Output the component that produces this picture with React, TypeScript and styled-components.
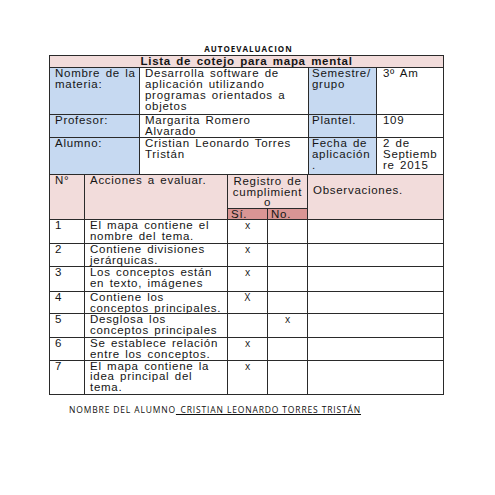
import React from "react";
import styled, { createGlobalStyle } from "styled-components";

const Global = createGlobalStyle`
  html, body { margin: 0; padding: 0; background: #ffffff; }
  body { width: 495px; height: 495px; overflow: hidden; }
`;

const Page = styled.div`
  width: 495px;
  padding-top: 44px;
  display: flex;
  flex-direction: column;
  align-items: flex-start;
`;

const Title = styled.div`
  align-self: center;
  font-family: "Open Sans", "DejaVu Sans", sans-serif;
  font-weight: 700;
  font-size: 8px;
  letter-spacing: 1px;
  line-height: 10px;
  color: #111;
  margin: 0 0 1px 2px;
`;

const Table = styled.table`
  border-collapse: collapse;
  table-layout: fixed;
  width: 394px;
  margin-left: 49px;
  font-family: "Liberation Sans", Arial, sans-serif;
  font-size: 11.5px;
  letter-spacing: 0.72px;
  word-spacing: 1.5px;
  line-height: 10.9px;
  color: #151515;
`;

const LowerTable = styled(Table)`
  margin-top: -1px;
  line-height: 10.7px;
`;

type Tone = "pink" | "blue" | "rose" | "white";
const bg: Record<Tone, string> = {
  pink: "#f2dcdb",
  blue: "#c6d9f1",
  rose: "#d99594",
  white: "#ffffff",
};

const Row = styled.tr<{ $h: number }>`
  height: ${(p) => p.$h}px;
`;

const Cell = styled.td<{ $tone?: Tone; $align?: string; $bold?: boolean; $pad?: string }>`
  border: 1px solid #2a2a2a;
  background: ${(p) => bg[p.$tone ?? "white"]};
  text-align: ${(p) => p.$align ?? "left"};
  font-weight: ${(p) => (p.$bold ? 700 : 400)};
  padding: ${(p) => p.$pad ?? "0 2px 0 5px"};
  vertical-align: top;
  overflow: hidden;
  overflow-wrap: anywhere;
`;

const SubHead = styled(Cell)`
  line-height: 10px;
  padding: 0 3px;
`;

const Mark = styled.span`
  font-family: "Open Sans", "DejaVu Sans", sans-serif;
  font-size: 10px;
  letter-spacing: 0;
`;

const Footer = styled.div`
  margin: 10px 0 0 69px;
  font-family: "Open Sans", "DejaVu Sans", sans-serif;
  font-size: 8.5px;
  letter-spacing: 0.85px;
  color: #111;
  line-height: 10px;
`;

const Underlined = styled.span`
  text-decoration: underline;
`;

const items: { n: string; text: string; si?: string; no?: string; h: number }[] = [
  { n: "1", text: "El mapa contiene el nombre del tema.", si: "x", h: 24 },
  { n: "2", text: "Contiene divisiones jerárquicas.", si: "x", h: 23 },
  { n: "3", text: "Los conceptos están en texto, imágenes", si: "x", h: 25 },
  { n: "4", text: "Contiene los conceptos principales.", si: "X", h: 21 },
  { n: "5", text: "Desglosa los conceptos principales", no: "x", h: 24 },
  { n: "6", text: "Se establece relación entre los conceptos.", si: "x", h: 22 },
  { n: "7", text: "El mapa contiene la idea principal del tema.", si: "x", h: 34 },
];

export default function App() {
  return (
    <>
      <Global />
      <Page>
        <Title>AUTOEVALUACION</Title>
        <Table>
          <colgroup>
            <col style={{ width: 90 }} />
            <col style={{ width: 169 }} />
            <col style={{ width: 68 }} />
            <col style={{ width: 67 }} />
          </colgroup>
          <tbody>
            <Row $h={12}>
              <Cell colSpan={4} $tone="pink" $align="center" $bold $pad="0">
                Lista de cotejo para mapa mental
              </Cell>
            </Row>
            <Row $h={47}>
              <Cell $tone="blue">Nombre de la materia:</Cell>
              <Cell>Desarrolla software de aplicación utilizando programas orientados a objetos</Cell>
              <Cell $tone="blue" $pad="0 1px 0 3px">Semestre/ grupo</Cell>
              <Cell $pad="0 4px 0 6px">3º Am</Cell>
            </Row>
            <Row $h={22}>
              <Cell $tone="blue">Profesor:</Cell>
              <Cell>Margarita Romero Alvarado</Cell>
              <Cell $tone="blue" $pad="0 1px 0 3px">Plantel.</Cell>
              <Cell $pad="0 4px 0 6px">109</Cell>
            </Row>
            <Row $h={37}>
              <Cell $tone="blue">Alumno:</Cell>
              <Cell>Cristian Leonardo Torres Tristán</Cell>
              <Cell $tone="blue" $pad="0 1px 0 3px">Fecha de aplicación .</Cell>
              <Cell $pad="0 4px 0 6px">2 de Septiembre 2015</Cell>
            </Row>
          </tbody>
        </Table>
        <LowerTable>
          <colgroup>
            <col style={{ width: 35 }} />
            <col style={{ width: 143 }} />
            <col style={{ width: 40 }} />
            <col style={{ width: 40 }} />
            <col style={{ width: 136 }} />
          </colgroup>
          <tbody>
            <Row $h={34}>
              <Cell rowSpan={2} $tone="pink">N°</Cell>
              <Cell rowSpan={2} $tone="pink">Acciones a evaluar.</Cell>
              <Cell colSpan={2} $tone="pink" $align="center" $pad="1px 2px 0 2px">
                Registro de cumplimiento
              </Cell>
              <Cell rowSpan={2} $tone="pink" $pad="10px 2px 0 5px">Observaciones.</Cell>
            </Row>
            <Row $h={11}>
              <SubHead $tone="rose">Sí.</SubHead>
              <SubHead $tone="rose">No.</SubHead>
            </Row>
            {items.map((it) => (
              <Row key={it.n} $h={it.h}>
                <Cell>{it.n}</Cell>
                <Cell>{it.text}</Cell>
                <Cell $align="center" $pad="0">{it.si && <Mark>{it.si}</Mark>}</Cell>
                <Cell $align="center" $pad="0">{it.no && <Mark>{it.no}</Mark>}</Cell>
                <Cell />
              </Row>
            ))}
          </tbody>
        </LowerTable>
        <Footer>
          NOMBRE DEL ALUMNO<Underlined>_CRISTIAN LEONARDO TORRES TRISTÁN</Underlined>
        </Footer>
      </Page>
    </>
  );
}
